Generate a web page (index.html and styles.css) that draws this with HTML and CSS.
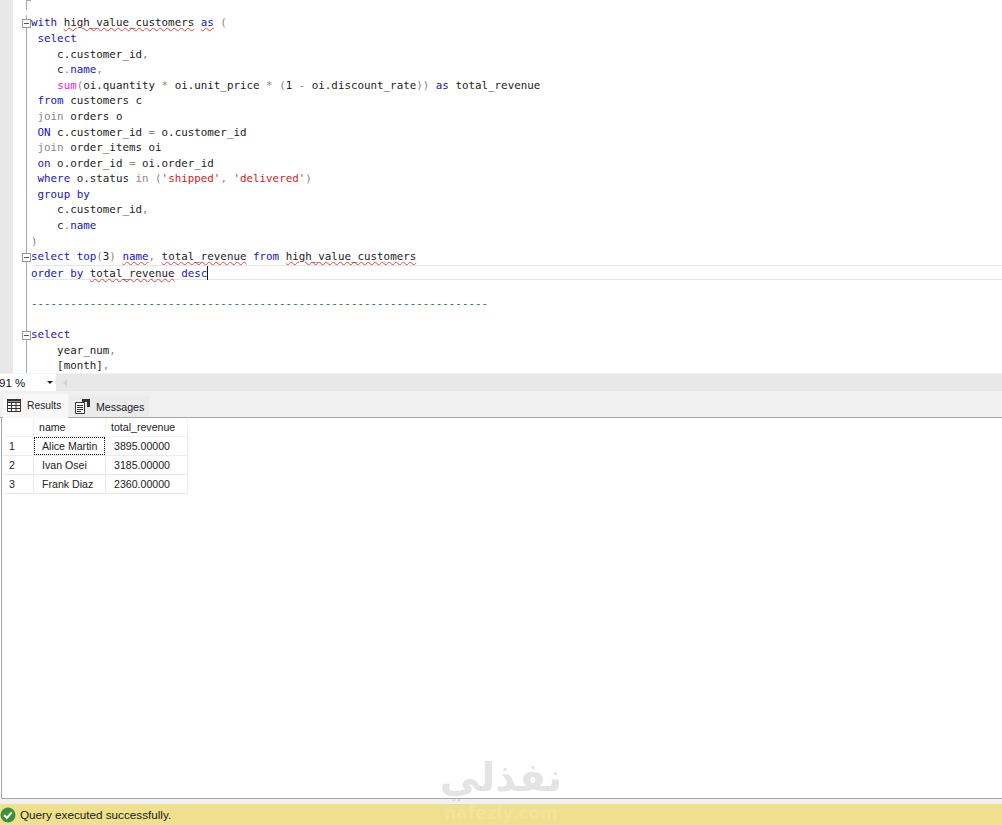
FILE: index.html
```html
<!DOCTYPE html>
<html lang="en">
<head>
    <meta charset="UTF-8">
    <title>SQLQuery1.sql</title>
    <link rel="stylesheet" href="styles.css">
</head>
<body>
    <div class="window">
        <div class="editor">
            <div class="row stub"><span class="fold"></span><span class="code"></span></div>
            <div class="row"><span class="fold box"></span><span class="code"><b>with</b> <u>high_value_customers</u> <b><u>as</u></b> <i>(</i></span></div>
            <div class="row"><span class="fold"></span><span class="code"> <b>select</b></span></div>
            <div class="row"><span class="fold"></span><span class="code">    c.customer_id<i>,</i></span></div>
            <div class="row"><span class="fold"></span><span class="code">    c<i>.</i><b>name</b><i>,</i></span></div>
            <div class="row"><span class="fold"></span><span class="code">    <em>sum</em><i>(</i>oi.quantity <i>*</i> oi.unit_price <i>*</i> <i>(</i>1 <i>-</i> oi.discount_rate<i>))</i> <b>as</b> total_revenue</span></div>
            <div class="row"><span class="fold"></span><span class="code"> <b>from</b> customers c</span></div>
            <div class="row"><span class="fold"></span><span class="code"> <i>join</i> orders o</span></div>
            <div class="row"><span class="fold"></span><span class="code"> <b>ON</b> c.customer_id <i>=</i> o.customer_id</span></div>
            <div class="row"><span class="fold"></span><span class="code"> <i>join</i> order_items oi</span></div>
            <div class="row"><span class="fold"></span><span class="code"> <b>on</b> o.order_id <i>=</i> oi.order_id</span></div>
            <div class="row"><span class="fold"></span><span class="code"> <b>where</b> o.status <i>in</i> <i>(</i><s>'shipped'</s><i>,</i> <s>'delivered'</s><i>)</i></span></div>
            <div class="row"><span class="fold"></span><span class="code"> <b>group by</b></span></div>
            <div class="row"><span class="fold"></span><span class="code">    c.customer_id<i>,</i></span></div>
            <div class="row"><span class="fold"></span><span class="code">    c<i>.</i><b>name</b></span></div>
            <div class="row"><span class="fold"></span><span class="code"><i>)</i></span></div>
            <div class="row"><span class="fold box"></span><span class="code"><b>select</b> <b>top</b><i>(</i>3<i>)</i> <b><u>name</u></b><i>,</i> <u>total_revenue</u> <b>from</b> <u>high_value_customers</u></span></div>
            <div class="row"><span class="fold"></span><span class="code current"><b>order by</b> <u>total_revenue</u> <b>desc</b><span class="caret"></span></span></div>
            <div class="row"><span class="fold"></span><span class="code"></span></div>
            <div class="row"><span class="fold"></span><span class="code"><span class="comment">----------------------------------------------------------------------</span></span></div>
            <div class="row"><span class="fold"></span><span class="code"></span></div>
            <div class="row"><span class="fold box"></span><span class="code"><b>select</b></span></div>
            <div class="row"><span class="fold"></span><span class="code">    year_num<i>,</i></span></div>
            <div class="row"><span class="fold"></span><span class="code">    [month]<i>,</i></span></div>
            <div class="row"><span class="fold"></span><span class="code"></span></div>
        </div>

        <div class="zoombar">
            <div class="zoom-select">
                <span>91 %</span>
                <span class="zoom-arrow"></span>
            </div>
            <div class="hscroll"><span class="scroll-arrow"></span></div>
        </div>

        <div class="tabs">
            <div class="tab active">
                <svg class="tab-icon" width="14" height="13" viewBox="0 0 14 13">
                    <path d="M.5.5h13v12H.5zM.5 3.5h13M.5 6.5h13M.5 9.5h13M4.5 3.5v9M9 3.5v9" fill="none" stroke="#333"/>
                    <path d="M0 0h14v2.5H0z" fill="#333"/>
                </svg>
                Results
            </div>
            <div class="tab">
                <svg class="tab-icon" width="15" height="15" viewBox="0 0 15 15">
                    <path d="M.5 3.5h9v11h-9zM2 6.5h6M2 8.5h6M2 10.5h6M2 12.5h4" fill="#fff" stroke="#333"/>
                    <path d="M7 0h8v8h-3V3H7z" fill="#333"/>
                </svg>
                Messages
            </div>
        </div>

        <div class="results">
            <table class="grid">
                <tr><th class="rownum"></th><th class="col-name">name</th><th class="col-rev">total_revenue</th></tr>
                <tr><td class="rownum">1</td><td class="picked"><span>Alice Martin</span></td><td>3895.00000</td></tr>
                <tr><td class="rownum">2</td><td>Ivan Osei</td><td>3185.00000</td></tr>
                <tr><td class="rownum">3</td><td>Frank Diaz</td><td>2360.00000</td></tr>
            </table>
        </div>

        <div class="spacer"></div>

        <div class="status">
            <svg width="16" height="16" viewBox="0 0 16 16">
                <circle cx="8" cy="8" r="7.5" fill="#3f8f3a"/>
                <path d="M4.2 8.3l2.6 2.7 5-5.6" fill="none" stroke="#fff" stroke-width="2"/>
            </svg>
            <span>Query executed successfully.</span>
        </div>

        <div class="watermark">
            <div class="wm-ar" dir="rtl">نفذلي</div>
            <div class="wm-en">nafezly.com</div>
        </div>
    </div>
</body>
</html>
```

FILE: styles.css
```css
html, body {
    margin: 0;
    padding: 0;
    background: #fff;
}
.window {
    position: relative;
    display: flex;
    flex-direction: column;
    height: 825px;
    overflow: hidden;
    font-family: "Liberation Sans", Arial, sans-serif;
    font-size: 10.6px;
    color: #222;
}

/* query editor */
.editor {
    height: 373px;
    flex: none;
    overflow: hidden;
    padding-left: 13px;
    background: linear-gradient(to right, #e8e8e8 13px, #fff 13px);
    font-family: "DejaVu Sans Mono", monospace;
    font-size: 10.85px;
    color: #222;
}
.row {
    display: flex;
    height: 15.6px;
    line-height: 15.6px;
}
.row.stub {
    height: 15.35px;
}
.fold {
    position: relative;
    flex: none;
    width: 18px;
}
.fold::before {
    content: "";
    position: absolute;
    left: 13px;
    top: 0;
    bottom: 0;
    width: 1px;
    background: #a8a8a8;
}
.stub .fold::before {
    bottom: 5px;
}
.stub .fold::after {
    content: "";
    position: absolute;
    left: 13px;
    top: 0;
    width: 5px;
    height: 1px;
    background: #a8a8a8;
}
.fold.box::after {
    content: "";
    position: absolute;
    left: 9px;
    top: 4px;
    width: 7px;
    height: 7px;
    border: 1px solid #999;
    background: linear-gradient(#555, #555) center / 5px 1px no-repeat #fff;
}
.code {
    flex: 1;
    white-space: pre;
}
.code.current {
    box-sizing: border-box;
    height: 15.6px;
    line-height: 13px;
    border-top: 1px solid #e6e6e6;
    border-bottom: 1px solid #e6e6e6;
}
.code b {
    font-weight: normal;
    color: #1414c8;
}
.code i {
    font-style: normal;
    color: #888;
}
.code em {
    font-style: normal;
    color: #e020d8;
}
.code s {
    text-decoration: none;
    color: #d82020;
}
.code u {
    text-decoration: underline wavy #e8413c 1px;
    text-underline-offset: 1px;
}
.comment {
    color: #118011;
}
.caret {
    display: inline-block;
    width: 1px;
    height: 14px;
    margin-bottom: -3px;
    background: #111;
}

/* zoom box + horizontal scrollbar */
.zoombar {
    display: flex;
    flex: none;
    height: 18px;
    background: #e8e8e8;
    border-top: 1px solid #f2f2f2;
    box-sizing: border-box;
}
.zoom-select {
    display: flex;
    align-items: center;
    justify-content: space-between;
    box-sizing: border-box;
    width: 57px;
    padding-right: 3px;
    margin-left: -1px;
    background: #fff;
    color: #111;
    font-size: 11.5px;
}
.zoom-arrow {
    width: 0;
    height: 0;
    border-left: 3px solid transparent;
    border-right: 3px solid transparent;
    border-top: 3px solid #222;
}
.hscroll {
    flex: 1;
    display: flex;
    align-items: center;
    padding-left: 7px;
}
.scroll-arrow {
    width: 0;
    height: 0;
    border-top: 4px solid transparent;
    border-bottom: 4px solid transparent;
    border-right: 4px solid #d4d4d4;
}

/* result tabs */
.tabs {
    display: flex;
    flex: none;
    align-items: flex-end;
    gap: 2px;
    box-sizing: border-box;
    height: 27px;
    padding-left: 3px;
    background: #f0f0f0;
    border-bottom: 1px solid #a6a6a6;
}
.tab {
    display: flex;
    align-items: center;
    gap: 6px;
    box-sizing: border-box;
    height: 21px;
    padding: 0 5px;
    background: #ebebeb;
    color: #222;
}
.tab.active {
    height: 24px;
    width: 65px;
    padding-left: 4px;
    padding-bottom: 2px;
    margin-bottom: -1px;
    background: #f8f8f8;
    font-size: 10.3px;
}

/* results grid */
.results {
    flex: none;
    height: 381px;
    margin-left: 1px;
    box-sizing: border-box;
    border-left: 1px solid #a6a6a6;
    border-bottom: 1px solid #a6a6a6;
}
.grid {
    border-collapse: separate;
    border-spacing: 0;
    table-layout: fixed;
    width: 185px;
    margin-left: 1px;
}
.grid th, .grid td {
    box-sizing: border-box;
    height: 19px;
    padding: 0 0 0 8px;
    font-weight: normal;
    text-align: left;
    white-space: nowrap;
    border-right: 1px solid #ebebeb;
    border-bottom: 1px solid #ebebeb;
}
.grid th {
    padding-left: 5px;
    border-bottom-color: #f3f3f3;
    border-right-color: #f3f3f3;
    background: #fff;
}
.grid th.rownum, .grid td.rownum {
    width: 31px;
    padding-left: 6px;
}
.col-name {
    width: 72px;
}
.grid td.picked {
    padding: 0;
}
.picked span {
    display: block;
    box-sizing: border-box;
    height: 18px;
    line-height: 16px;
    padding-left: 7px;
    border: 1px dotted #111;
}

/* status bar */
.spacer {
    flex: 1;
    background: #f0f0f0;
}
.status {
    display: flex;
    flex: none;
    align-items: center;
    gap: 4px;
    height: 21px;
    box-sizing: border-box;
    background: #eee08c;
    color: #1a1a1a;
    font-size: 11.7px;
}

/* site watermark */
.watermark {
    position: absolute;
    left: 401px;
    top: 752px;
    width: 200px;
    text-align: center;
    font-family: "DejaVu Sans", sans-serif;
    font-weight: bold;
    filter: blur(0.6px);
    pointer-events: none;
}
.wm-ar {
    height: 50px;
    line-height: 50px;
    font-size: 40px;
    color: rgba(190, 190, 190, 0.42);
}
.wm-en {
    height: 20px;
    line-height: 20px;
    margin-top: 1px;
    font-size: 17px;
    color: rgba(255, 255, 255, 0.16);
}
```
